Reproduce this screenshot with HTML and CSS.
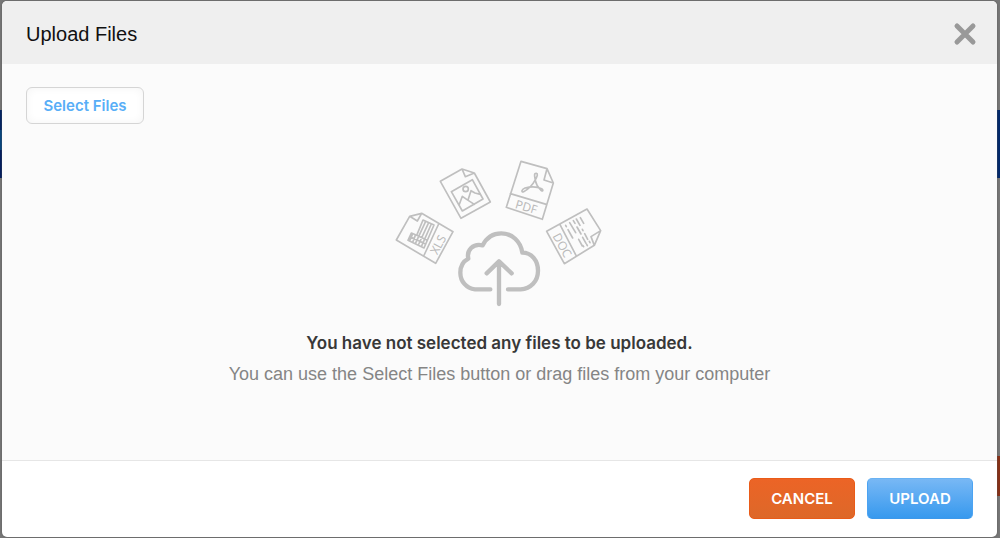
FILE: index.html
```html
<!DOCTYPE html>
<html lang="en">
<head>
<meta charset="utf-8">
<title>Upload Files</title>
<link rel="stylesheet" href="styles.css">
</head>
<body>
<section class="dialog" role="dialog" aria-labelledby="dialog-title">
  <header class="dialog-header">
    <h1 class="dialog-title" id="dialog-title">Upload Files</h1>
    <button class="close" type="button" aria-label="Close">
      <svg viewBox="0 0 24 24" aria-hidden="true"><path d="M4 4 20 20M20 4 4 20"/></svg>
    </button>
  </header>
  <main class="dialog-body">
    <button class="select-files" type="button">Select Files</button>
    <div class="empty">
      <svg class="art" viewBox="0 0 660 450" aria-hidden="true">
        <g class="thin" transform="translate(-15 -24)">
          <path d="M166 94 231 57 268 69 316 156 228 205ZM231 57 241 80 268 69"/>
          <path d="M199 125 262 89 294 147 232 183ZM222 166 232 139 246 149 268 163M249 150 258 122 270 129 286 133"/>
          <circle cx="242" cy="117" r="8"/>
          <path d="M34 270 74 199 110 190 204 245 152 340ZM74 199 97 213 110 190M161 222 116 318"/>
          <path d="M114 210 147 225 117 294 69 271 79 249 95 256ZM122 214 91 281M131 218 100 285M139 222 109 290M95 256 127 271M83 252 74 272M91 256 83 277M75 260 122 282"/>
          <text x="160" y="296" transform="rotate(-62 160 284)">XLS</text>
        </g>
        <g class="thin" transform="translate(315 -24)">
          <path d="M78 34 156 56 175 99 142 208 34 172ZM156 56 147 90 175 99M46 131 154 163"/>
          <path d="M124 70C115 69 120 83 121 91 123 102 129 112 137 120 142 127 147 120 140 116 124 109 106 110 90 114 79 118 78 128 86 125 99 119 115 101 123 86 126 79 130 71 124 70Z"/>
          <text x="94" y="184" transform="rotate(16 94 171)">PDF</text>
          <path d="M155 244 276 177 317 242 298 286 208 341ZM317 242 288 260 298 286M195 224 243 316"/>
          <path d="M212 226 214 230M219 239 233 264M224 218 242 248M235 212 240 220M246 231 258 252M244 207 255 226M256 203 266 220M251 268 262 288M263 262 273 280M262 238 264 242M269 251 278 268M264 287 266 290M275 283 277 287M283 274 285 278"/>
          <text x="201" y="298" transform="rotate(61 201 286)">DOC</text>
        </g>
        <g class="thick" transform="translate(150 186)">
          <path d="M151 208H105C79 205 61 184 61 158 61 139 70 124 85 116 79 91 99 69 128 76 140 52 160 40 184 40 216 40 242 64 247 98 275 98 294 122 294 152 294 184 272 206 242 208H204M177 252V127M140 160 177 124 215 160"/>
        </g>
      </svg>
      <p class="empty-title">You have not selected any files to be uploaded.</p>
      <p class="empty-hint">You can use the Select Files button or drag files from your computer</p>
    </div>
  </main>
  <footer class="dialog-footer">
    <button class="action cancel" type="button">CANCEL</button>
    <button class="action upload" type="button">UPLOAD</button>
  </footer>
</section>
</body>
</html>
```
FILE: styles.css
```css
* { box-sizing: border-box; }

body {
  display: flex;
  min-height: 100vh;
  margin: 0;
  padding: 1px 3px 1px 2px;
  background:
    linear-gradient(#873016, #873016) right 456px / 3px 40px no-repeat,
    linear-gradient(#002263 0 20px, #064580 20px 40px, #001c5e 40px) 0 110px / 2px 68px no-repeat,
    linear-gradient(#00286b, #00286b) right 110px / 3px 68px no-repeat,
    #777;
  font-family: Inter, "Liberation Sans", sans-serif;
}

button {
  font: inherit;
  cursor: pointer;
}

.dialog {
  display: flex;
  flex: 1;
  flex-direction: column;
  overflow: hidden;
  border-radius: 5px;
  background: #fff;
  box-shadow: 0 0 2px #555;
}

.dialog-header {
  display: flex;
  align-items: center;
  justify-content: space-between;
  height: 63px;
  padding: 2px 20px 0 24px;
  background: #efefef;
}

.dialog-title {
  margin: 0;
  color: #111;
  font-family: "Liberation Sans", sans-serif;
  font-size: 20px;
  font-weight: 400;
  line-height: 24px;
}

.close {
  display: flex;
  padding: 0;
  border: 0;
  background: none;
}

.close svg {
  width: 24px;
  height: 24px;
  fill: none;
  stroke: #999;
  stroke-width: 5;
  stroke-linecap: round;
}

.dialog-body {
  flex: 1;
  padding: 23px 24px;
  background: #fbfbfb;
}

.select-files {
  display: block;
  width: 118px;
  height: 37px;
  padding: 0;
  border: 1px solid #d5d5d5;
  border-radius: 6px;
  background: #fff;
  box-shadow: inset 0 0 8px #f4f4f4;
  color: #58aef7;
  font-size: 15px;
  font-weight: 600;
}

.empty {
  display: flex;
  flex-direction: column;
  align-items: center;
  padding-top: 34px;
  text-align: center;
}

.art {
  width: 220px;
  height: 150px;
  fill: none;
  stroke: #bfbfbf;
  stroke-linecap: round;
  stroke-linejoin: round;
}

.thin { stroke-width: 5; }
.thick { stroke-width: 13; }

.art text {
  fill: #b8b8b8;
  stroke: none;
  font-family: "Open Sans", sans-serif;
  font-size: 36px;
  font-weight: 500;
  text-anchor: middle;
}

.empty-title,
.empty-hint {
  margin: 0;
  line-height: 24px;
}

.empty-title {
  margin-top: 23px;
  color: #383838;
  font-size: 17px;
  font-weight: 600;
}

.empty-hint {
  margin-top: 7px;
  color: #858585;
  font-family: "Liberation Sans", sans-serif;
  font-size: 18px;
}

.dialog-footer {
  display: flex;
  align-items: center;
  justify-content: flex-end;
  gap: 12px;
  height: 77px;
  padding: 0 24px 2px;
  border-top: 1px solid #e6e6e6;
}

.action {
  width: 106px;
  height: 41px;
  padding: 0;
  border: 1px solid;
  border-radius: 5px;
  color: #fff;
  font-size: 15px;
  font-weight: 600;
}

.cancel {
  border-color: #ea5b18;
  background: linear-gradient(#ec6426, #dd6829);
}

.upload {
  border-color: #69b2f3 #4ba3f2 #3c98ea;
  background: linear-gradient(#78b8f5, #3799ee);
}
```
